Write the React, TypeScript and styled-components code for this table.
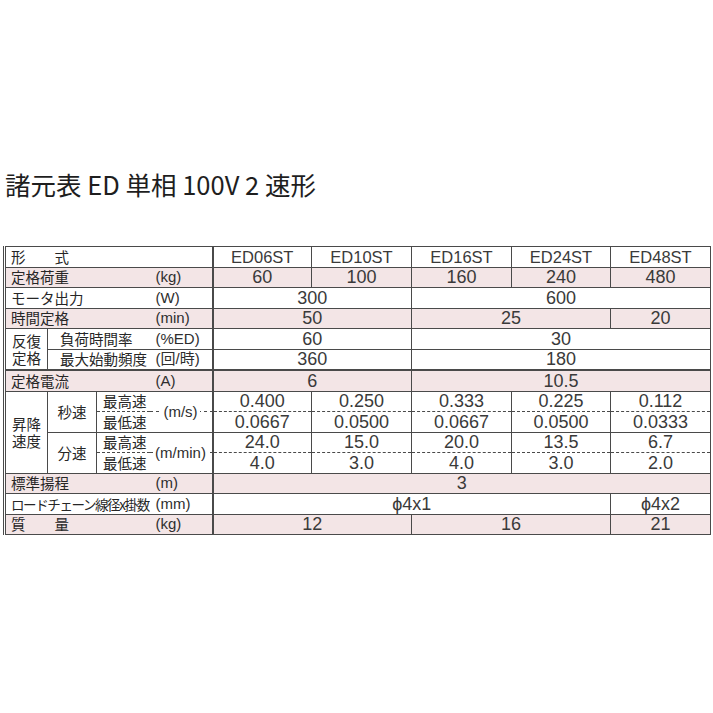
import { FC } from "react";
import styled, { createGlobalStyle } from "styled-components";

const lineColor = "#4a4a4a";
const pink = "#f3e5e6";

const GlobalStyle = createGlobalStyle`
  body {
    margin: 0;
    background: #fff;
  }
`;

const Page = styled.div`
  width: 713px;
  height: 713px;
  box-sizing: border-box;
  padding: 168px 0 0 3px;
  font-family: "Liberation Sans", "Noto Sans CJK JP", sans-serif;
  color: #333;
  overflow: hidden;
`;

const Title = styled.h1`
  margin: 0 0 47px 2px;
  font-family: "Noto Sans CJK JP", sans-serif;
  font-size: 25.5px;
  font-weight: 400;
  line-height: 31px;
  color: #1e1e1e;
`;

const Spec = styled.table`
  border-collapse: collapse;
  table-layout: fixed;
  width: 708px;
  border-left: 3px double ${lineColor};
`;

const Col = styled.col<{ $w: number }>`
  width: ${(p) => p.$w}px;
`;

const Row = styled.tr<{ $pink?: boolean; $thick?: boolean }>`
  background: ${(p) => (p.$pink ? pink : "#fff")};
  & > td {
    ${(p) => (p.$thick ? "border-top-width: 2px;" : "")}
  }
`;

const cellBase = `
  height: 19.5px;
  padding: 0;
  border: 1px solid ${lineColor};
  line-height: 18px;
  white-space: nowrap;
  overflow: hidden;
`;

const Label = styled.td<{ $indent?: number; $tight?: boolean }>`
  ${cellBase}
  border-right: none;
  padding-left: ${(p) => p.$indent ?? 5}px;
  font-family: "Noto Sans CJK JP", sans-serif;
  font-size: ${(p) => (p.$tight ? 13.5 : 14.5)}px;
  letter-spacing: ${(p) => (p.$tight ? "-1.4px" : "0")};
  color: #262626;
`;

const Group = styled.td`
  ${cellBase}
  text-align: center;
  font-family: "Noto Sans CJK JP", sans-serif;
  font-size: 14.5px;
  line-height: 17.5px;
  color: #262626;
`;

const SubLabel = styled.td<{ $dashed?: boolean; $below?: boolean }>`
  ${cellBase}
  border-right: none;
  padding-left: 6px;
  font-family: "Noto Sans CJK JP", sans-serif;
  font-size: 14.5px;
  color: #262626;
  ${(p) => (p.$dashed ? `border-bottom: 1px dashed ${lineColor};` : "")}
  ${(p) => (p.$below ? "border-top: none;" : "")}
`;

const Unit = styled.td`
  ${cellBase}
  border-left: none;
  border-right-width: 2px;
  padding-left: 6px;
  font-size: 15px;
  color: #2e2e2e;
`;

const SpeedUnit = styled(Unit)`
  padding-left: 0;
  text-align: center;
  background-image: repeating-linear-gradient(
    to right,
    ${lineColor} 0 3px,
    transparent 3px 6px
  );
  background-size: 100% 1px;
  background-position: 0 50%;
  background-repeat: no-repeat;

  span {
    background: #fff;
    padding: 0 2px;
  }
`;

const Value = styled.td<{ $dashed?: boolean; $below?: boolean; $head?: boolean }>`
  ${cellBase}
  text-align: center;
  font-size: ${(p) => (p.$head ? 16.5 : 18)}px;
  color: #3a3a3a;
  ${(p) => (p.$dashed ? `border-bottom: 1px dashed ${lineColor};` : "")}
  ${(p) => (p.$below ? "border-top: none;" : "")}
`;

const models = ["ED06ST", "ED10ST", "ED16ST", "ED24ST", "ED48ST"];

const SpeedBlock: FC<{ unit: string; high: string[] }> = ({ unit, high }) => (
  <>
    <SubLabel $dashed>最高速</SubLabel>
    <SpeedUnit rowSpan={2}>
      <span>{unit}</span>
    </SpeedUnit>
    {high.map((v, i) => (
      <Value key={i} $dashed>
        {v}
      </Value>
    ))}
  </>
);

const LowRow: FC<{ low: string[] }> = ({ low }) => (
  <Row>
    <SubLabel $below>最低速</SubLabel>
    {low.map((v, i) => (
      <Value key={i} $below>
        {v}
      </Value>
    ))}
  </Row>
);

export default function App() {
  const secHigh = ["0.400", "0.250", "0.333", "0.225", "0.112"];
  const secLow = ["0.0667", "0.0500", "0.0667", "0.0500", "0.0333"];
  const minHigh = ["24.0", "15.0", "20.0", "13.5", "6.7"];
  const minLow = ["4.0", "3.0", "4.0", "3.0", "2.0"];

  return (
    <Page>
      <GlobalStyle />
      <Title>諸元表 ED 単相 100V 2 速形</Title>
      <Spec>
        <colgroup>
          <Col $w={43} />
          <Col $w={49} />
          <Col $w={53} />
          <Col $w={63} />
          <Col $w={99} />
          <Col $w={100} />
          <Col $w={100} />
          <Col $w={99} />
          <Col $w={100} />
        </colgroup>
        <tbody>
          <Row>
            <Label colSpan={3}>形　　式</Label>
            <Unit />
            {models.map((m) => (
              <Value key={m} $head>
                {m}
              </Value>
            ))}
          </Row>
          <Row $pink>
            <Label colSpan={3}>定格荷重</Label>
            <Unit>(kg)</Unit>
            <Value>60</Value>
            <Value>100</Value>
            <Value>160</Value>
            <Value>240</Value>
            <Value>480</Value>
          </Row>
          <Row>
            <Label colSpan={3}>モータ出力</Label>
            <Unit>(W)</Unit>
            <Value colSpan={2}>300</Value>
            <Value colSpan={3}>600</Value>
          </Row>
          <Row $pink>
            <Label colSpan={3}>時間定格</Label>
            <Unit>(min)</Unit>
            <Value colSpan={2}>50</Value>
            <Value colSpan={2}>25</Value>
            <Value>20</Value>
          </Row>
          <Row>
            <Group rowSpan={2}>
              反復
              <br />
              定格
            </Group>
            <Label colSpan={2} $indent={12}>
              負荷時間率
            </Label>
            <Unit>(%ED)</Unit>
            <Value colSpan={2}>60</Value>
            <Value colSpan={3}>30</Value>
          </Row>
          <Row>
            <Label colSpan={2} $indent={12}>
              最大始動頻度
            </Label>
            <Unit>(回/時)</Unit>
            <Value colSpan={2}>360</Value>
            <Value colSpan={3}>180</Value>
          </Row>
          <Row $pink $thick>
            <Label colSpan={3}>定格電流</Label>
            <Unit>(A)</Unit>
            <Value colSpan={2}>6</Value>
            <Value colSpan={3}>10.5</Value>
          </Row>
          <Row>
            <Group rowSpan={4}>
              昇降
              <br />
              速度
            </Group>
            <Group rowSpan={2}>秒速</Group>
            <SpeedBlock unit="(m/s)" high={secHigh} />
          </Row>
          <LowRow low={secLow} />
          <Row>
            <Group rowSpan={2}>分速</Group>
            <SpeedBlock unit="(m/min)" high={minHigh} />
          </Row>
          <LowRow low={minLow} />
          <Row $pink>
            <Label colSpan={3}>標準揚程</Label>
            <Unit>(m)</Unit>
            <Value colSpan={5}>3</Value>
          </Row>
          <Row>
            <Label colSpan={3} $tight>
              ロードチェーン線径x掛数
            </Label>
            <Unit>(mm)</Unit>
            <Value colSpan={4}>ϕ4x1</Value>
            <Value>ϕ4x2</Value>
          </Row>
          <Row $pink>
            <Label colSpan={3}>質　　量</Label>
            <Unit>(kg)</Unit>
            <Value colSpan={2}>12</Value>
            <Value colSpan={2}>16</Value>
            <Value>21</Value>
          </Row>
        </tbody>
      </Spec>
    </Page>
  );
}
